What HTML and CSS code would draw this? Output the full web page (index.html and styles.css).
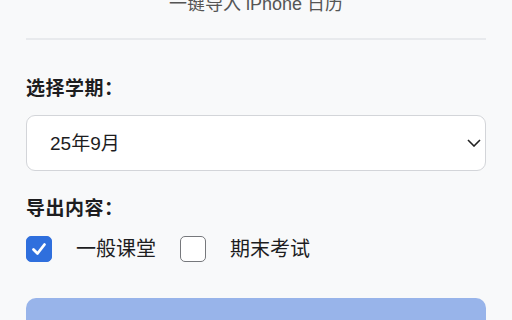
FILE: index.html
```html
<!doctype html>
<html>
<head>
<meta charset="utf-8">
<title>导入日历</title>
<link rel="stylesheet" href="styles.css">
</head>
<body>
<div class="page">
	<p class="sub">一键导入 iPhone 日历</p>
	<div class="line"></div>

	<p class="label">选择学期：</p>
	<div class="sel">
		<select>
			<option>25年9月</option>
			<option>25年3月</option>
		</select>
		<svg class="arrow" width="14" height="8" viewBox="0 0 14 8"><path d="M1 1 L7 7 L13 1" fill="none" stroke="#222" stroke-width="1.6"/></svg>
	</div>

	<p class="label label2">导出内容：</p>
	<div class="checks">
		<label class="chk">
			<span class="box on">
				<svg width="18" height="18" viewBox="0 0 18 18"><path d="M3.5 9.5 L7.5 13.5 L14.5 4.5" fill="none" stroke="#fff" stroke-width="2.8" stroke-linecap="round" stroke-linejoin="round"/></svg>
			</span>
			<span class="txt">一般课堂</span>
		</label>
		<label class="chk">
			<span class="box"></span>
			<span class="txt">期末考试</span>
		</label>
	</div>

	<div class="btn"></div>
</div>
</body>
</html>
```

FILE: styles.css
```css
body,p { margin:0; padding:0;}
body { background:#f8f9fa; font-family:"Liberation Sans","Noto Sans CJK SC",sans-serif; color:#1d1d1f;}

.page { padding:0 26px; margin-top:-8px;}

.sub { text-align:center; font-size:18px; line-height:24px; color:#555;}
.line { height:2px; background:#e8eaed; margin-top:22px;}

.label { font-size:19px; line-height:24px; font-weight:bold; letter-spacing:0.5px; margin-top:37px;}
.label2 { margin-top:26px;}

.sel { position:relative; margin-top:14px;}
.sel select { display:block; width:100%; height:56px; -webkit-appearance:none; appearance:none; background:#fff; border:1px solid #d3d5d9; border-radius:9px; padding:0 0 0 23px; font-family:inherit; font-size:19px; color:#1d1d1f; outline:none;}
.arrow { position:absolute; right:5px; top:24px; pointer-events:none;}

.checks { display:flex; align-items:center; margin-top:15px; height:26px;}
.chk { display:flex; align-items:center; margin-right:24px;}
.box { box-sizing:border-box; width:26px; height:26px; border:1px solid #76787c; border-radius:5px; background:#fff; display:flex; align-items:center; justify-content:center;}
.box.on { background:#2f6fdd; border-color:#2f6fdd;}
.txt { font-size:20px; line-height:26px; margin-left:24px;}

.btn { height:56px; margin-top:36px; background:#98b4ea; border-radius:10px;}
```
